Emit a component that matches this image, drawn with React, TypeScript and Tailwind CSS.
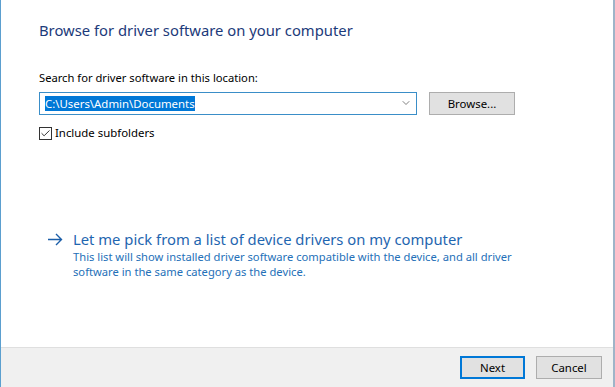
import { ChevronDown, Check } from 'lucide-react';

const font = { fontFamily: '"Noto Sans", "Liberation Sans", sans-serif' };

const App = () => {
  return (
    <div
      className="w-[615px] h-[387px] flex flex-col bg-white border-l border-[#5b9fcf] border-r-2 border-r-[#9fb4c8] overflow-hidden"
      style={font}
    >
      {/* Content */}
      <main className="flex-1 pl-[38px] pt-[20px]">
        <h1 className="text-[14.8px] leading-[20px] text-[#1c3a7a]">
          Browse for driver software on your computer
        </h1>

        <p className="mt-[30px] text-[11.2px] leading-[16px] text-black">
          Search for driver software in this location:
        </p>

        <div className="mt-[5px] flex items-center gap-[12px]">
          <div className="w-[378px] h-[23px] border border-[#3a8ec8] flex items-center pl-[5px] pr-[4px]">
            <span className="flex-1 text-[11.4px] leading-[17px]">
              <span className="bg-[#0078d7] text-white">C:\Users\Admin\Documents</span>
            </span>
            <ChevronDown className="w-[12px] h-[12px] text-[#555]" strokeWidth={1.5} />
          </div>
          <button className="w-[86px] h-[23px] mt-[1px] bg-[#e1e1e1] border border-[#adadad] text-[11.4px] text-black">
            Browse...
          </button>
        </div>

        <label className="mt-[10px] flex items-center gap-[3px] text-[11.4px] leading-[16px] text-black">
          <span className="w-[13px] h-[13px] border border-[#333] bg-white flex items-center justify-center">
            <Check className="w-[11px] h-[11px] text-[#222]" strokeWidth={2} />
          </span>
          Include subfolders
        </label>

        <div className="mt-[88px] flex items-start gap-[10px] pl-[8px]">
          <svg width="16" height="20" viewBox="0 0 16 20" className="shrink-0">
            <path d="M1 10.5 H14.5 M9 5 L14.5 10.5 L9 16" fill="none" stroke="#1b5ea8" strokeWidth="1.4" />
          </svg>
          <div>
            <p className="text-[14.8px] leading-[20px] text-[#1f66b0]">
              Let me pick from a list of device drivers on my computer
            </p>
            <p className="text-[11.2px] leading-[15px] text-[#2470b8] w-[450px]">
              This list will show installed driver software compatible with the device, and all driver
              software in the same category as the device.
            </p>
          </div>
        </div>
      </main>

      {/* Footer */}
      <footer className="h-[40px] bg-[#f0f0f0] border-t border-[#dfdfdf] flex items-center justify-end gap-[11px] pr-[11px]">
        <button className="w-[65px] h-[23px] bg-[#e1e1e1] border-2 border-[#0078d7] text-[11.4px] text-black">
          Next
        </button>
        <button className="w-[66px] h-[23px] bg-[#e1e1e1] border border-[#adadad] text-[11.4px] text-black">
          Cancel
        </button>
      </footer>
    </div>
  );
};

export default App;
